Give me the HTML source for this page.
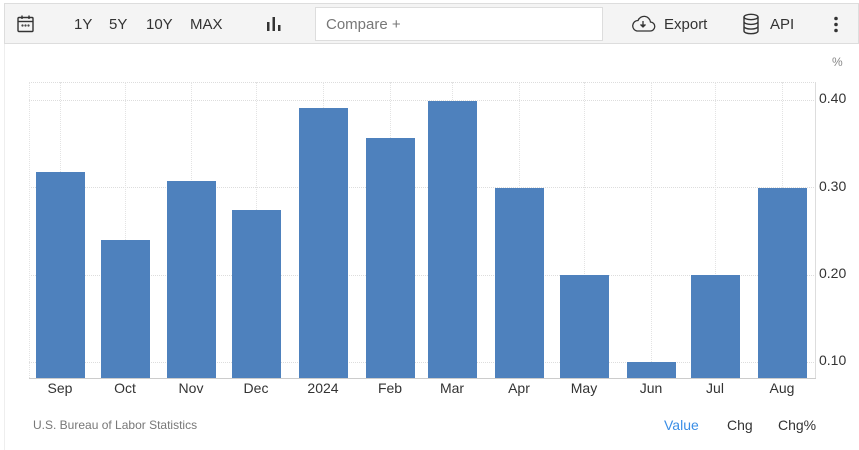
<!DOCTYPE html>
<html><head><meta charset="utf-8"><style>
*{margin:0;padding:0;box-sizing:border-box}
body{width:859px;height:450px;background:#fff;font-family:"Liberation Sans",sans-serif;position:relative;overflow:hidden;color:#333}
.tb{position:absolute;left:4px;top:3px;width:855px;height:41px;background:#f4f4f4;border:1px solid #ddd}
.t{position:absolute;font-size:15px;color:#333;top:16px}
.cmp{position:absolute;left:315px;top:7px;width:288px;height:34px;background:#fff;border:1px solid #ddd;font-size:15px;color:#777;padding:8px 10px}
.pane{position:absolute;left:4px;top:44px;width:855px;height:406px;border-left:1px solid #eee}
.bar{position:absolute;background:#4e81bd;width:49px}
.xl{position:absolute;top:380px;font-size:14px;color:#333;width:60px;text-align:center}
.yl{position:absolute;left:819px;font-size:14px;color:#333}
.hg{position:absolute;left:29px;width:787px;border-top:1px dotted #ddd}
.vg{position:absolute;top:82px;height:296px;border-left:1px dotted #e3e3e3}
</style></head><body>
<div class="tb"></div>
<svg style="position:absolute;left:16px;top:14px" width="20" height="20" viewBox="0 0 20 20" fill="none" stroke="#333" stroke-width="1.4"><rect x="2" y="3.5" width="15" height="14" rx="1"/><line x1="2" y1="7.5" x2="17" y2="7.5"/><line x1="6" y1="1.5" x2="6" y2="5"/><line x1="13" y1="1.5" x2="13" y2="5"/><circle cx="6.5" cy="11.5" r=".4" fill="#333"/><circle cx="9.5" cy="11.5" r=".4" fill="#333"/><circle cx="12.5" cy="11.5" r=".4" fill="#333"/></svg>
<div class="t" style="left:74px">1Y</div>
<div class="t" style="left:109px">5Y</div>
<div class="t" style="left:146px">10Y</div>
<div class="t" style="left:190px">MAX</div>
<svg style="position:absolute;left:266px;top:16px" width="16" height="16"><rect x="1" y="6" width="2.5" height="9" fill="#333"/><rect x="6.5" y="1" width="2.5" height="14" fill="#333"/><rect x="12" y="9" width="2.5" height="6" fill="#333"/></svg>
<div class="cmp">Compare +</div>
<svg style="position:absolute;left:630px;top:14px" width="26" height="20" viewBox="0 0 26 20" fill="none" stroke="#333" stroke-width="1.3"><path d="M7 17h13a4.5 4.5 0 0 0 .5-9 6.5 6.5 0 0 0-12.5-1.5A5.3 5.3 0 0 0 7 17z"/><path d="M13 7v6M10.5 10.5L13 13l2.5-2.5" fill="#333"/></svg>
<div class="t" style="left:664px">Export</div>
<svg style="position:absolute;left:742px;top:13px" width="18" height="22" viewBox="0 0 18 22" fill="none" stroke="#333" stroke-width="1.4"><ellipse cx="9" cy="4" rx="7" ry="2.7"/><path d="M2 4v14c0 1.5 3 2.7 7 2.7s7-1.2 7-2.7V4M2 8.7c0 1.5 3 2.7 7 2.7s7-1.2 7-2.7M2 13.4c0 1.5 3 2.7 7 2.7s7-1.2 7-2.7"/></svg>
<div class="t" style="left:770px">API</div>
<svg style="position:absolute;left:833px;top:16px" width="6" height="18"><circle cx="3" cy="2.5" r="1.8" fill="#333"/><circle cx="3" cy="8.5" r="1.8" fill="#333"/><circle cx="3" cy="14.5" r="1.8" fill="#333"/></svg>
<div class="pane"></div>
<div style="position:absolute;left:832px;top:55px;font-size:12px;color:#888">%</div>
<div class="hg" style="top:82px"></div>
<div class="hg" style="top:100px"></div>
<div class="hg" style="top:187px"></div>
<div class="hg" style="top:275px"></div>
<div class="hg" style="top:362px"></div>
<div class="vg" style="left:29px"></div>
<div class="vg" style="left:60px"></div><div class="vg" style="left:125px"></div><div class="vg" style="left:191px"></div><div class="vg" style="left:256px"></div><div class="vg" style="left:323px"></div><div class="vg" style="left:390px"></div><div class="vg" style="left:452px"></div><div class="vg" style="left:519px"></div><div class="vg" style="left:584px"></div><div class="vg" style="left:651px"></div><div class="vg" style="left:715px"></div><div class="vg" style="left:782px"></div>
<div class="vg" style="left:815px;border-left:1px solid #ddd"></div>
<div style="position:absolute;left:29px;top:378px;width:787px;border-top:1px solid #ccc"></div>
<div class="bar" style="left:36px;top:172px;height:206px"></div>
<div class="bar" style="left:101px;top:240px;height:138px"></div>
<div class="bar" style="left:167px;top:181px;height:197px"></div>
<div class="bar" style="left:232px;top:210px;height:168px"></div>
<div class="bar" style="left:299px;top:108px;height:270px"></div>
<div class="bar" style="left:366px;top:138px;height:240px"></div>
<div class="bar" style="left:428px;top:101px;height:277px"></div>
<div class="bar" style="left:495px;top:188px;height:190px"></div>
<div class="bar" style="left:560px;top:275px;height:103px"></div>
<div class="bar" style="left:627px;top:362px;height:16px"></div>
<div class="bar" style="left:691px;top:275px;height:103px"></div>
<div class="bar" style="left:758px;top:188px;height:190px"></div>
<div class="xl" style="left:30px">Sep</div><div class="xl" style="left:95px">Oct</div><div class="xl" style="left:161px">Nov</div><div class="xl" style="left:226px">Dec</div><div class="xl" style="left:293px">2024</div><div class="xl" style="left:360px">Feb</div><div class="xl" style="left:422px">Mar</div><div class="xl" style="left:489px">Apr</div><div class="xl" style="left:554px">May</div><div class="xl" style="left:621px">Jun</div><div class="xl" style="left:685px">Jul</div><div class="xl" style="left:752px">Aug</div>
<div class="yl" style="top:90px">0.40</div>
<div class="yl" style="top:178px">0.30</div>
<div class="yl" style="top:265px">0.20</div>
<div class="yl" style="top:352px">0.10</div>
<div style="position:absolute;left:33px;top:418px;font-size:12px;color:#777">U.S. Bureau of Labor Statistics</div>
<div style="position:absolute;left:664px;top:417px;font-size:14px;color:#3a8ee6">Value</div>
<div style="position:absolute;left:727px;top:417px;font-size:14px;color:#333">Chg</div>
<div style="position:absolute;left:778px;top:417px;font-size:14px;color:#333">Chg%</div>
</body></html>
